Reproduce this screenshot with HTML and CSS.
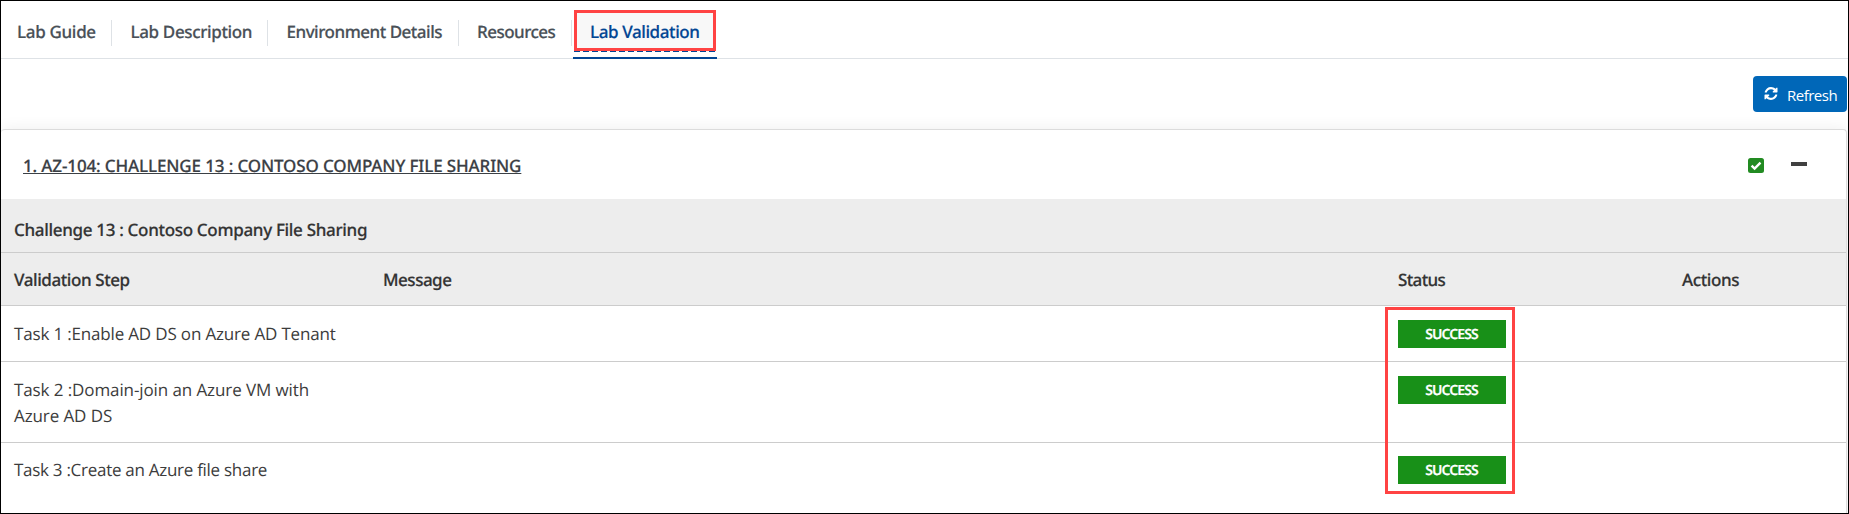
FILE: index.html
```html
<!DOCTYPE html>
<html lang="en">
<head>
<meta charset="utf-8">
<title>Lab Validation</title>
<link rel="stylesheet" href="styles.css">
</head>
<body>
<main class="frame">
  <nav class="tabs">
    <a class="tab tab-guide">Lab Guide</a>
    <a class="tab tab-description">Lab Description</a>
    <a class="tab tab-environment">Environment Details</a>
    <a class="tab tab-resources">Resources</a>
    <a class="tab tab-active"><span class="tab-label">Lab Validation</span></a>
  </nav>
  <div class="toolbar">
    <button class="refresh">
      <svg class="refresh-icon" viewBox="0 0 1536 1536"><path fill="#fff" d="M1511 928q0 5-1 7-64 268-268 434.500T764 1536q-146 0-282.500-55T238 1324l-129 129q-19 19-45 19t-45-19-19-45V960q0-26 19-45t45-19h448q26 0 45 19t19 45-19 45l-137 137q71 66 161 102t187 36q134 0 250-65t186-179q11-17 53-117 8-23 30-23h192q13 0 22.500 9.500t9.500 22.500zM1536 128v448q0 26-19 45t-45 19h-448q-26 0-45-19t-19-45 19-45l138-138Q969 256 768 256q-134 0-250 65T332 500q-11 17-53 117-8 23-30 23H50q-13 0-22.500-9.500T18 608v-7q65-268 270-434.500T768 0q146 0 284 55.500T1297 212l130-129q19-19 45-19t45 19 19 45z"/></svg>
      <span class="refresh-label">Refresh</span>
    </button>
  </div>
  <section class="card">
    <header class="card-head">
      <h2 class="card-title">1. AZ-104: CHALLENGE 13 : CONTOSO COMPANY FILE SHARING</h2>
      <svg class="check" viewBox="0 0 16 15"><rect width="16" height="15" rx="2.5" fill="#228b22"/><path d="M3.6 7.6l3 3L12.500 4.700" fill="none" stroke="#fff" stroke-width="2.400"/></svg>
      <span class="minus"></span>
    </header>
    <div class="group">Challenge 13 : Contoso Company File Sharing</div>
    <div class="row row-head">
      <span class="head-step">Validation Step</span>
      <span class="head-message">Message</span>
      <span class="head-status">Status</span>
      <span class="head-actions">Actions</span>
    </div>
    <div class="row row-task row-first">
      <span class="task task-one">Task 1 :Enable AD DS on Azure AD Tenant</span><span></span>
      <span class="badge">SUCCESS</span>
    </div>
    <div class="row row-task row-tall">
      <span class="task task-two">Task 2 :Domain-join an Azure VM with<br>Azure AD DS</span><span></span>
      <span class="badge">SUCCESS</span>
    </div>
    <div class="row row-task row-last">
      <span class="task task-three">Task 3 :Create an Azure file share</span><span></span>
      <span class="badge">SUCCESS</span>
    </div>
  </section>
  <div class="mark mark-tab"></div>
  <div class="mark mark-status"></div>
</main>
</body>
</html>
```

FILE: styles.css
```css
* { box-sizing: border-box; }
body { margin: 0; background: #fff; }
.frame {
  position: relative;
  width: 1849px;
  height: 514px;
  border: 1px solid #000;
  overflow: hidden;
  font: 500 17px/26px "Noto Sans", "Open Sans", sans-serif;
  color: #333;
  text-rendering: geometricPrecision;
  -webkit-text-stroke: .2px;
}
.tabs {
  display: flex;
  height: 58px;
  border-bottom: 1px solid #dee2e6;
}
.tab {
  position: relative;
  flex: none;
  height: 58px;
  padding-top: 18px;
  color: #495057;
  white-space: nowrap;
}
.tab:not(.tab-active)::after {
  content: "";
  position: absolute;
  right: 0;
  top: 19px;
  width: 1px;
  height: 26px;
  background: #dee2e6;
}
.tab-guide { width: 111px; padding-left: 16px; letter-spacing: -.32px; }
.tab-description { width: 156px; padding-left: 18.5px; letter-spacing: -.36px; }
.tab-environment { width: 191px; padding-left: 18.5px; letter-spacing: -.49px; }
.tab-resources { width: 113px; padding-left: 18px; letter-spacing: -.52px; }
.tab-active {
  width: 144px;
  margin-left: 1px;
  padding: 9px 1px 0;
  border-bottom: 2px solid #014593;
  color: #014593;
  letter-spacing: -.4px;
}
.tab-label {
  display: block;
  height: 42px;
  padding: 9px 0 0 16px;
  background:
    repeating-linear-gradient(90deg, #014593 0 6px, transparent 6px 9px) 0 100% / 100% 1px no-repeat,
    #f8f8f8;
}
.toolbar {
  display: flex;
  justify-content: flex-end;
  height: 70px;
  padding: 17px 1px 0 0;
}
.refresh {
  display: flex;
  align-items: flex-start;
  gap: 9px;
  width: 94px;
  height: 36px;
  padding: 5px 0 0 11px;
  border: 0;
  border-radius: 4px;
  background: #0067b8;
  color: #fff;
  font: 400 15px/28px "Open Sans", "Noto Sans", sans-serif;
  letter-spacing: -.5px;
  -webkit-text-stroke: 0;
}
.refresh-icon { width: 14px; height: 13px; margin-top: 6px; }
.card {
  width: 1846px;
  height: 400px;
  border: 1px solid #dcdcdc;
  border-width: 1px 1px 0 0;
  border-radius: 4px 4px 0 0;
  box-shadow: 0 0 16px rgba(0, 0, 0, .07);
  background: #fff;
}
.card-head {
  display: flex;
  height: 69px;
  padding: 0 39px 0 22px;
}
.card-title {
  flex: 1;
  margin: 23px 0 0;
  font: inherit;
  letter-spacing: -.135px;
  color: #3b4045;
  text-decoration: underline;
  text-underline-offset: 1px;
  text-decoration-thickness: 1px;
  text-decoration-skip-ink: none;
}
.check { width: 16px; height: 15px; margin: 28px 27px 0 0; }
.minus { width: 16px; height: 4px; margin-top: 32px; background: #404040; }
.group {
  height: 54px;
  padding: 18px 0 0 13px;
  background: #ededed;
  border-bottom: 1px solid #ccc;
  letter-spacing: -.32px;
}
.row {
  display: grid;
  grid-template-columns: 369px 1015px 284px 1fr;
  padding-left: 13px;
  align-items: start;
  border-bottom: 1px solid #ccc;
}
.row-head { height: 53px; padding-top: 14px; background: #ededed; }
.head-step { letter-spacing: -.42px; }
.head-message { letter-spacing: -.5px; }
.head-status { letter-spacing: -.65px; }
.head-actions { letter-spacing: -.4px; }
.row-task { padding-top: 14px; }
.row-first { height: 56px; }
.row-tall { height: 81px; }
.row-last { height: 70px; padding-top: 13px; border: 0; }
.task {
  padding-top: 1px;
  font-family: "Open Sans", "Noto Sans", sans-serif;
  font-weight: 400;
  color: #3c3c3c;
  -webkit-text-stroke: 0;
}
.task-one { letter-spacing: -.17px; }
.task-two { letter-spacing: -.1px; }
.task-three { letter-spacing: -.28px; }
.badge {
  width: 108px;
  height: 28px;
  padding-right: 1px;
  background: #189018;
  color: #fff;
  font: 600 14px/29px "Noto Sans", "Open Sans", sans-serif;
  letter-spacing: -.95px;
  text-align: center;
}
.mark { position: absolute; border: 3px solid #ff4343; }
.mark-tab { left: 573px; top: 9px; width: 142px; height: 41px; }
.mark-status { left: 1384px; top: 306px; width: 130px; height: 187px; }
```
